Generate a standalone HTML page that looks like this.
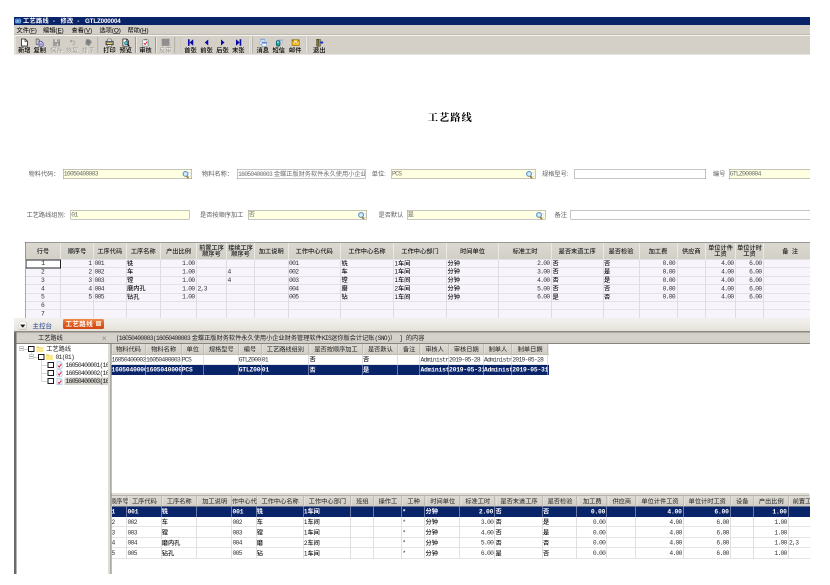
<!DOCTYPE html>
<html lang="zh-CN"><head><meta charset="utf-8"><title>工艺路线 - 修改 - GTLZ000004</title>
<style>
html,body{margin:0;padding:0;background:#fff;width:830px;height:585px;overflow:hidden}
#s{position:absolute;left:0;top:0;width:1660px;height:1170px;transform:scale(.5);transform-origin:0 0;font:12.4px/14px "Liberation Sans","Noto Sans CJK SC",sans-serif;color:#000;overflow:hidden;will-change:transform}
#s div{position:absolute;white-space:nowrap;box-sizing:border-box}
.n{font-family:"Liberation Mono","Noto Sans CJK SC",monospace;font-size:12.6px;letter-spacing:-1.36px;margin-top:0.5px}
u{text-decoration:underline}
</style></head>
<body>
<div id="s">
<div style="left:28px;top:34px;width:1591.5px;height:15.6px;background:#0a246a"></div>
<svg style="position:absolute;left:30px;top:36.500px" width="12.500" height="10.500" viewBox="0 0 13 12" preserveAspectRatio="none"><rect width="13" height="12" rx="2.500" fill="#3f80cf"/><rect x="1.500" y="3" width="10" height="6" rx="1" fill="#a9cff2"/><path d="M3 4v4M3 6l2-2M3 6l2 2M7 4h2.500v2H7.500h2v2H7" fill="none" stroke="#2a5fb0" stroke-width="1"/></svg>
<div style="left:46px;top:34.5px;height:15px;line-height:15px;color:#fff;font-weight:bold"><span style="letter-spacing:0.6px">工艺路线</span><span style="letter-spacing:4px"> - </span><span style="letter-spacing:0.6px">修改</span><span style="letter-spacing:4px"> - </span><span style="letter-spacing:-0.25px">GTLZ000004</span></div>
<div style="left:28px;top:49.6px;width:1591.5px;height:20px;background:#d4d0c8"></div>
<div style="left:33px;top:53.5px;height:15px;line-height:15px;">文件(<u>F</u>)</div>
<div style="left:86px;top:53.5px;height:15px;line-height:15px;">编辑(<u>E</u>)</div>
<div style="left:143px;top:53.5px;height:15px;line-height:15px;">查看(<u>V</u>)</div>
<div style="left:199px;top:53.5px;height:15px;line-height:15px;">选项(<u>O</u>)</div>
<div style="left:255px;top:53.5px;height:15px;line-height:15px;">帮助(<u>H</u>)</div>
<div style="left:28px;top:69px;width:1591.5px;height:39.6px;background:#d4d0c8;border-top:1.2px solid #a9a69f"></div>
<div style="left:28px;top:70.2px;width:1591.5px;height:1.4px;background:#f6f5f1"></div>
<div style="left:29px;top:70.2px;width:1.6px;height:37.4px;background:#f1f0eb"></div>
<div style="left:28px;top:107.6px;width:1591.5px;height:1px;background:#cbc8c0"></div>
<svg style="position:absolute;left:40.6px;top:77px" width="16" height="16" viewBox="0 0 16 16"><path d="M1.8 1h7.4l4.6 4.4V15.2H1.8z" fill="#fff" stroke="#2a2a2a" stroke-width="1.7"/><path d="M9 1v4.6h4.8" fill="none" stroke="#2a2a2a" stroke-width="1.4"/></svg>
<div style="left:33.6px;top:93.6px;width:30px;height:14px;line-height:14px;text-align:center;color:#000;font-weight:500">新增</div>
<svg style="position:absolute;left:71.4px;top:77px" width="16" height="16" viewBox="0 0 16 16"><path d="M1.200 1h4.600l2 2v8.500H1.200z" fill="#c4c4c4" stroke="#5a5a5a" stroke-width="1.300"/><path d="M7.200 5.400h4.300l3.700 3.600v6.200H7.200z" fill="#e4e6fa" stroke="#3434b0" stroke-width="1.500"/><path d="M9.300 9.300h3.800v3.900H9.300z" fill="#9094a6"/></svg>
<div style="left:64.4px;top:93.6px;width:30px;height:14px;line-height:14px;text-align:center;color:#000;font-weight:500">复制</div>
<svg style="position:absolute;left:105px;top:77px" width="16" height="16" viewBox="0 0 16 16"><rect x="1.5" y="1.5" width="13.5" height="13.8" fill="#8f8f8f"/><rect x="4.3" y="1.5" width="7.5" height="5.8" fill="#dad7d0"/><rect x="9" y="2.3" width="1.8" height="4" fill="#8f8f8f"/><rect x="4" y="9.6" width="8.5" height="5.7" fill="#a9a6a0"/><rect x="9.2" y="10.6" width="2.2" height="3.6" fill="#e4e2dc"/></svg>
<div style="left:100px;top:94.6px;width:28px;height:14px;line-height:14px;text-align:center;color:#fff">保存</div>
<div style="left:99px;top:93.6px;width:28px;height:14px;line-height:14px;text-align:center;color:#9a978f">保存</div>
<svg style="position:absolute;left:136.6px;top:77px" width="16" height="16" viewBox="0 0 16 16"><path d="M5 5h4.2a3.6 3.6 0 0 1 0 7.2H8" fill="none" stroke="#a3a09a" stroke-width="1.5"/><path d="M6.2 2 2.6 5 6.2 8z" fill="#8f8c86"/></svg>
<div style="left:131.6px;top:94.6px;width:28px;height:14px;line-height:14px;text-align:center;color:#fff">恢复</div>
<div style="left:130.6px;top:93.6px;width:28px;height:14px;line-height:14px;text-align:center;color:#9a978f">恢复</div>
<svg style="position:absolute;left:168.6px;top:77px" width="16" height="16" viewBox="0 0 16 16"><path d="M3 1.5h7l1 2 3 1v5l-2 1-1 3-3 1.5-3-2-3-1V6l1-2z" fill="#8a8a8a"/><path d="M5 3h5v7H5z" fill="#7c7c7c"/></svg>
<div style="left:163.6px;top:94.6px;width:28px;height:14px;line-height:14px;text-align:center;color:#fff">排序</div>
<div style="left:162.6px;top:93.6px;width:28px;height:14px;line-height:14px;text-align:center;color:#9a978f">排序</div>
<svg style="position:absolute;left:211px;top:77px" width="16" height="16" viewBox="0 0 16 16"><path d="M4.5 1h6.5l2 4.5H3z" fill="#fff" stroke="#333" stroke-width="1"/><path d="M1 5.5h14.5v7H1z" fill="#bdbab2" stroke="#222" stroke-width="1.3"/><rect x="2.5" y="8.5" width="11.5" height="3.4" fill="#e3d04e" stroke="#444" stroke-width=".7"/><path d="M3.5 12.5h9.5l-1 2.8H4.5z" fill="#fff" stroke="#222" stroke-width="1"/><circle cx="12.6" cy="7" r=".9" fill="#3c3"/></svg>
<div style="left:204px;top:93.6px;width:30px;height:14px;line-height:14px;text-align:center;color:#000;font-weight:500">打印</div>
<svg style="position:absolute;left:243.5px;top:77px" width="16" height="16" viewBox="0 0 16 16"><path d="M1.8 1h7.2l4 4V15.2H1.8z" fill="#fff" stroke="#222" stroke-width="1.6"/><path d="M9 1v4h4" fill="none" stroke="#222" stroke-width="1.2"/><circle cx="8.2" cy="9.3" r="3.1" fill="#58d6d6" stroke="#1d6a78" stroke-width="1.5"/><path d="M10.6 11.8 15 16" stroke="#111" stroke-width="2.4"/></svg>
<div style="left:236.5px;top:93.6px;width:30px;height:14px;line-height:14px;text-align:center;color:#000;font-weight:500">预览</div>
<svg style="position:absolute;left:283px;top:77px" width="16" height="16" viewBox="0 0 16 16"><rect x="2.6" y="2.6" width="11" height="12.6" rx="1" fill="#fff" stroke="#75878e" stroke-width="1.3"/><rect x="5.5" y=".8" width="5.2" height="3" rx=".8" fill="#6f8088"/><path d="M4.8 9.4l2.4 2.6L11.6 6.2" fill="none" stroke="#dc1e2c" stroke-width="2"/><path d="M13 4.5v9.5" stroke="#55a9b4" stroke-width="1.6"/></svg>
<div style="left:276px;top:93.6px;width:30px;height:14px;line-height:14px;text-align:center;color:#000;font-weight:500">审核</div>
<svg style="position:absolute;left:323px;top:77px" width="16" height="16" viewBox="0 0 16 16"><rect x=".5" y=".5" width="16" height="14" fill="#8e8e8e"/><rect x=".5" y=".5" width="16" height="14" fill="none" stroke="#a8a8a8" stroke-width="1"/></svg>
<div style="left:318px;top:94.6px;width:28px;height:14px;line-height:14px;text-align:center;color:#fff">反审</div>
<div style="left:317px;top:93.6px;width:28px;height:14px;line-height:14px;text-align:center;color:#9a978f">反审</div>
<svg style="position:absolute;left:373px;top:77px" width="16" height="16" viewBox="0 0 16 16"><rect x="3" y="1.5" width="3.2" height="13" fill="#0808a8"/><path d="M13.5 1.5v13L6.2 8z" fill="#0808a8"/></svg>
<div style="left:366px;top:93.6px;width:30px;height:14px;line-height:14px;text-align:center;color:#000;font-weight:500">首张</div>
<svg style="position:absolute;left:405px;top:77px" width="16" height="16" viewBox="0 0 16 16"><path d="M11.5 2v12L4.5 8z" fill="#0808a8"/></svg>
<div style="left:398px;top:93.6px;width:30px;height:14px;line-height:14px;text-align:center;color:#000;font-weight:500">前张</div>
<svg style="position:absolute;left:437px;top:77px" width="16" height="16" viewBox="0 0 16 16"><path d="M5 2v12l7-6z" fill="#0808a8"/></svg>
<div style="left:430px;top:93.6px;width:30px;height:14px;line-height:14px;text-align:center;color:#000;font-weight:500">后张</div>
<svg style="position:absolute;left:468.6px;top:77px" width="16" height="16" viewBox="0 0 16 16"><rect x="10.3" y="1.5" width="3.2" height="13" fill="#0808a8"/><path d="M3 1.5v13l7.3-6.500z" fill="#0808a8"/></svg>
<div style="left:461.6px;top:93.6px;width:30px;height:14px;line-height:14px;text-align:center;color:#000;font-weight:500">末张</div>
<svg style="position:absolute;left:517.5px;top:77px" width="16" height="16" viewBox="0 0 16 16"><rect x="2.5" y="1" width="9" height="8" rx="1" fill="#e8f1fb" stroke="#8aa5d4" stroke-width="1"/><rect x="2.5" y="1" width="9" height="2.6" fill="#86a8e0"/><rect x="1" y="5.5" width="7" height="6" rx="1" fill="#dfe9f8" stroke="#8aa5d4" stroke-width=".9"/><rect x="6" y="7.5" width="9.5" height="8" rx="1" fill="#f2f7fd" stroke="#6b8fc9" stroke-width="1.1"/><rect x="6" y="7.5" width="9.5" height="2.6" fill="#5c88d2"/></svg>
<div style="left:510.5px;top:93.6px;width:30px;height:14px;line-height:14px;text-align:center;color:#000;font-weight:500">消息</div>
<svg style="position:absolute;left:549.5px;top:77px" width="16" height="16" viewBox="0 0 16 16"><rect x="8" y="1.5" width="7" height="7.5" fill="#d5ddee" stroke="#93a4c6" stroke-width=".9"/><rect x="9.5" y="3" width="4" height="2" fill="#8fa6d6"/><rect x="2.5" y="4" width="7.5" height="11.5" rx="3" fill="#1b9ca2" stroke="#0c4f5a" stroke-width="1.2"/><rect x="4.3" y="6" width="3.8" height="3.4" fill="#8de6e2"/></svg>
<div style="left:542.5px;top:93.6px;width:30px;height:14px;line-height:14px;text-align:center;color:#000;font-weight:500">短信</div>
<svg style="position:absolute;left:582.5px;top:77px" width="16" height="16" viewBox="0 0 16 16"><rect x="1" y="2.5" width="14.5" height="11.5" fill="#f4c42c" stroke="#8a6808" stroke-width="1.3"/><path d="M1.5 3 8.2 9.2 15 3" fill="none" stroke="#7a5208" stroke-width="1.3"/><rect x="5" y="5.2" width="6.4" height="3.2" fill="#fffad8" opacity=".9"/></svg>
<div style="left:575.5px;top:93.6px;width:30px;height:14px;line-height:14px;text-align:center;color:#000;font-weight:500">邮件</div>
<svg style="position:absolute;left:630.5px;top:77px" width="16" height="16" viewBox="0 0 16 16"><path d="M2.5 1.5h7v14h-7z" fill="#cdb94e" stroke="#3e3a1c" stroke-width="1.2"/><path d="M2.5 1.500l4.5 2.2v12.800l-4.500-1.500z" fill="#7f752c" stroke="#33301a" stroke-width="1"/><path d="M9 6.800h3.200V4.300l3.800 3.700-3.800 3.700V9.200H9z" fill="#1428d0"/></svg>
<div style="left:623.5px;top:93.6px;width:30px;height:14px;line-height:14px;text-align:center;color:#000;font-weight:500">退出</div>
<div style="left:195.4px;top:73.5px;width:1.6px;height:32px;background:#9d9a93"></div>
<div style="left:197px;top:73.5px;width:1.2px;height:32px;background:#fbfaf8"></div>
<div style="left:270.2px;top:73.5px;width:1.6px;height:32px;background:#9d9a93"></div>
<div style="left:271.8px;top:73.5px;width:1.2px;height:32px;background:#fbfaf8"></div>
<div style="left:310.2px;top:73.5px;width:1.6px;height:32px;background:#9d9a93"></div>
<div style="left:311.8px;top:73.5px;width:1.2px;height:32px;background:#fbfaf8"></div>
<div style="left:349.3px;top:73.5px;width:1.6px;height:32px;background:#9d9a93"></div>
<div style="left:350.9px;top:73.5px;width:1.2px;height:32px;background:#fbfaf8"></div>
<div style="left:495.8px;top:73.5px;width:1.6px;height:32px;background:#9d9a93"></div>
<div style="left:497.4px;top:73.5px;width:1.2px;height:32px;background:#fbfaf8"></div>
<div style="left:609.8px;top:73.5px;width:1.6px;height:32px;background:#9d9a93"></div>
<div style="left:611.4px;top:73.5px;width:1.2px;height:32px;background:#fbfaf8"></div>
<div style="left:359.8px;top:72.5px;width:1.2px;height:34px;background:#fbfaf8"></div>
<div style="left:361px;top:72.5px;width:1.4px;height:34px;background:#99968e"></div>
<div style="left:503.3px;top:72.5px;width:1.2px;height:34px;background:#fbfaf8"></div>
<div style="left:504.5px;top:72.5px;width:1.4px;height:34px;background:#99968e"></div>
<div style="left:615.8px;top:72.5px;width:1.2px;height:34px;background:#fbfaf8"></div>
<div style="left:617px;top:72.5px;width:1.4px;height:34px;background:#99968e"></div>
<div style="left:800.5px;top:221.5px;width:200px;height:26px;line-height:26px;font:700 20.6px/26px 'Liberation Serif','Noto Serif CJK SC',serif;letter-spacing:1.9px;text-align:center;color:#000">工艺路线</div>
<div style="left:57px;top:341px;height:14px;line-height:14px;color:#5c5c5c">物料代码：</div>
<div style="left:126px;top:338px;width:257.5px;height:19.6px;background:#ffffe1;border:1px solid #8c8c8c"></div>
<div class="n" style="left:127.5px;top:340.2px;height:14px;line-height:14px;color:#6e6e6e">16050400003</div>
<svg style="position:absolute;left:364px;top:339.5px" width="18" height="18" viewBox="0 0 16 16"><rect x="8" y="4.500" width="7" height="7" fill="#fff" stroke="#c3cfe6" stroke-width=".8"/><circle cx="6.300" cy="7" r="4.300" fill="#d2effb" stroke="#5f8fd2" stroke-width="2"/><path d="M9.200 11.800l1.600 1.900" stroke="#a5831c" stroke-width="3.200" stroke-linecap="round"/></svg>
<div style="left:404px;top:341px;height:14px;line-height:14px;color:#5c5c5c">物料名称：</div>
<div style="left:474px;top:338px;width:256.6px;height:19.6px;background:#fff;border:1px solid #8c8c8c;overflow:hidden"><div style="left:1px;top:1.5px;height:14px;line-height:14px;color:#6e6e6e"><span class="n" style="position:static">16050400003</span> 金蝶正版财务软件永久使用小企业财务管理软件</div></div>
<div style="left:743.5px;top:341px;height:14px;line-height:14px;color:#5c5c5c">单位:</div>
<div style="left:782.6px;top:338px;width:288px;height:19.6px;background:#ffffe1;border:1px solid #8c8c8c"></div>
<div class="n" style="left:784.1px;top:340.2px;height:14px;line-height:14px;color:#6e6e6e">PCS</div>
<svg style="position:absolute;left:1051.1px;top:339.5px" width="18" height="18" viewBox="0 0 16 16"><rect x="8" y="4.500" width="7" height="7" fill="#fff" stroke="#c3cfe6" stroke-width=".8"/><circle cx="6.300" cy="7" r="4.300" fill="#d2effb" stroke="#5f8fd2" stroke-width="2"/><path d="M9.200 11.800l1.600 1.900" stroke="#a5831c" stroke-width="3.200" stroke-linecap="round"/></svg>
<div style="left:1084px;top:341px;height:14px;line-height:14px;color:#5c5c5c">规格型号:</div>
<div style="left:1149.4px;top:338px;width:262.6px;height:19.6px;background:#fff;border:1px solid #8c8c8c"></div>
<div style="left:1426px;top:341px;height:14px;line-height:14px;color:#5c5c5c">编号</div>
<div style="left:1458px;top:338px;width:167px;height:19.6px;background:#ffffe1;border:1px solid #8c8c8c"></div>
<div class="n" style="left:1459.5px;top:340.2px;height:14px;line-height:14px;color:#6e6e6e">GTLZ000004</div>
<div style="left:53px;top:422.5px;height:14px;line-height:14px;color:#5c5c5c">工艺路线组别:</div>
<div style="left:141px;top:420px;width:238px;height:18.8px;background:#ffffe1;border:1px solid #8c8c8c"></div>
<div class="n" style="left:142.5px;top:422.2px;height:14px;line-height:14px;color:#6e6e6e">01</div>
<div style="left:400px;top:422.5px;height:14px;line-height:14px;color:#5c5c5c">是否按顺序加工</div>
<div style="left:496px;top:420px;width:238px;height:18.8px;background:#ffffe1;border:1px solid #8c8c8c"></div>
<div style="left:497.5px;top:422.2px;height:14px;line-height:14px;color:#6e6e6e">否</div>
<svg style="position:absolute;left:714.5px;top:421.5px" width="18" height="18" viewBox="0 0 16 16"><rect x="8" y="4.500" width="7" height="7" fill="#fff" stroke="#c3cfe6" stroke-width=".8"/><circle cx="6.300" cy="7" r="4.300" fill="#d2effb" stroke="#5f8fd2" stroke-width="2"/><path d="M9.200 11.800l1.600 1.900" stroke="#a5831c" stroke-width="3.200" stroke-linecap="round"/></svg>
<div style="left:757px;top:422.5px;height:14px;line-height:14px;color:#5c5c5c">是否默认</div>
<div style="left:814px;top:420px;width:276.6px;height:18.8px;background:#ffffe1;border:1px solid #8c8c8c"></div>
<div style="left:815.5px;top:422.2px;height:14px;line-height:14px;color:#6e6e6e">是</div>
<svg style="position:absolute;left:1071.1px;top:421.5px" width="18" height="18" viewBox="0 0 16 16"><rect x="8" y="4.500" width="7" height="7" fill="#fff" stroke="#c3cfe6" stroke-width=".8"/><circle cx="6.300" cy="7" r="4.300" fill="#d2effb" stroke="#5f8fd2" stroke-width="2"/><path d="M9.200 11.800l1.600 1.900" stroke="#a5831c" stroke-width="3.200" stroke-linecap="round"/></svg>
<div style="left:1109px;top:422.5px;height:14px;line-height:14px;color:#5c5c5c">备注</div>
<div style="left:1140.6px;top:420px;width:484.4px;height:18.8px;background:#fff;border:1px solid #8c8c8c"></div>
<div style="left:1619.5px;top:300px;width:60px;height:200px;background:#fff"></div>
<div style="left:51px;top:484.5px;width:1568.5px;height:151.9px;background:#f7f4fb"></div>
<div style="left:51px;top:484.5px;width:1568.5px;height:34.3px;background:linear-gradient(#dcd9d2,#d2cfc7)"></div>
<div style="left:50px;top:483.5px;width:1569.5px;height:1.6px;background:#5a5a5a"></div>
<div style="left:49.6px;top:483.5px;width:1.6px;height:152.9px;background:#5a5a5a"></div>
<div style="left:51px;top:495.5px;width:70px;height:14px;line-height:14px;text-align:center;color:#1a1a1a;font-weight:500">行号</div>
<div style="left:120px;top:485.5px;width:2px;height:33.3px;background:#ebe9e4"></div>
<div style="left:121px;top:495.5px;width:66px;height:14px;line-height:14px;text-align:center;color:#1a1a1a;font-weight:500">顺序号</div>
<div style="left:186px;top:485.5px;width:2px;height:33.3px;background:#ebe9e4"></div>
<div style="left:187px;top:495.5px;width:65px;height:14px;line-height:14px;text-align:center;color:#1a1a1a;font-weight:500">工序代码</div>
<div style="left:252px;top:485.5px;width:2px;height:33.3px;background:#ebe9e4"></div>
<div style="left:252px;top:495.5px;width:69px;height:14px;line-height:14px;text-align:center;color:#1a1a1a;font-weight:500">工序名称</div>
<div style="left:320px;top:485.5px;width:2px;height:33.3px;background:#ebe9e4"></div>
<div style="left:321px;top:495.5px;width:72px;height:14px;line-height:14px;text-align:center;color:#1a1a1a;font-weight:500">产出比例</div>
<div style="left:392px;top:485.5px;width:2px;height:33.3px;background:#ebe9e4"></div>
<div style="left:393px;top:491px;width:60px;height:24px;line-height:24px;text-align:center;line-height:11.6px;color:#1a1a1a;font-weight:500">前置工序<br>顺序号</div>
<div style="left:452px;top:485.5px;width:2px;height:33.3px;background:#ebe9e4"></div>
<div style="left:453px;top:491px;width:56px;height:24px;line-height:24px;text-align:center;line-height:11.6px;color:#1a1a1a;font-weight:500">接续工序<br>顺序号</div>
<div style="left:508px;top:485.5px;width:2px;height:33.3px;background:#ebe9e4"></div>
<div style="left:509px;top:495.5px;width:67px;height:14px;line-height:14px;text-align:center;color:#1a1a1a;font-weight:500">加工说明</div>
<div style="left:576px;top:485.5px;width:2px;height:33.3px;background:#ebe9e4"></div>
<div style="left:576px;top:495.5px;width:105px;height:14px;line-height:14px;text-align:center;color:#1a1a1a;font-weight:500">工作中心代码</div>
<div style="left:680px;top:485.5px;width:2px;height:33.3px;background:#ebe9e4"></div>
<div style="left:681px;top:495.5px;width:106px;height:14px;line-height:14px;text-align:center;color:#1a1a1a;font-weight:500">工作中心名称</div>
<div style="left:786px;top:485.5px;width:2px;height:33.3px;background:#ebe9e4"></div>
<div style="left:787px;top:495.5px;width:106px;height:14px;line-height:14px;text-align:center;color:#1a1a1a;font-weight:500">工作中心部门</div>
<div style="left:892px;top:485.5px;width:2px;height:33.3px;background:#ebe9e4"></div>
<div style="left:893px;top:495.5px;width:104px;height:14px;line-height:14px;text-align:center;color:#1a1a1a;font-weight:500">时间单位</div>
<div style="left:996px;top:485.5px;width:2px;height:33.3px;background:#ebe9e4"></div>
<div style="left:997px;top:495.5px;width:106px;height:14px;line-height:14px;text-align:center;color:#1a1a1a;font-weight:500">标准工时</div>
<div style="left:1102px;top:485.5px;width:2px;height:33.3px;background:#ebe9e4"></div>
<div style="left:1103px;top:495.5px;width:103px;height:14px;line-height:14px;text-align:center;color:#1a1a1a;font-weight:500">是否末道工序</div>
<div style="left:1206px;top:485.5px;width:2px;height:33.3px;background:#ebe9e4"></div>
<div style="left:1206px;top:495.5px;width:72px;height:14px;line-height:14px;text-align:center;color:#1a1a1a;font-weight:500">是否检验</div>
<div style="left:1278px;top:485.5px;width:2px;height:33.3px;background:#ebe9e4"></div>
<div style="left:1278px;top:495.5px;width:76px;height:14px;line-height:14px;text-align:center;color:#1a1a1a;font-weight:500">加工费</div>
<div style="left:1354px;top:485.5px;width:2px;height:33.3px;background:#ebe9e4"></div>
<div style="left:1354px;top:495.5px;width:57px;height:14px;line-height:14px;text-align:center;color:#1a1a1a;font-weight:500">供应商</div>
<div style="left:1410px;top:485.5px;width:2px;height:33.3px;background:#ebe9e4"></div>
<div style="left:1411px;top:491px;width:60px;height:24px;line-height:24px;text-align:center;line-height:11.6px;color:#1a1a1a;font-weight:500">单位计件<br>工资</div>
<div style="left:1470px;top:485.5px;width:2px;height:33.3px;background:#ebe9e4"></div>
<div style="left:1471px;top:491px;width:56px;height:24px;line-height:24px;text-align:center;line-height:11.6px;color:#1a1a1a;font-weight:500">单位计时<br>工资</div>
<div style="left:1526px;top:485.5px;width:2px;height:33.3px;background:#ebe9e4"></div>
<div style="left:1534px;top:495.5px;width:92.5px;height:14px;line-height:14px;text-align:center;color:#1a1a1a;font-weight:500">备&nbsp;&nbsp;注</div>
<div style="left:51px;top:518px;width:1568.5px;height:2px;background:#e4e1e9"></div>
<div style="left:51px;top:534px;width:1568.5px;height:2px;background:#e4e1e9"></div>
<div style="left:51px;top:552px;width:1568.5px;height:2px;background:#e4e1e9"></div>
<div style="left:51px;top:568px;width:1568.5px;height:2px;background:#e4e1e9"></div>
<div style="left:51px;top:586px;width:1568.5px;height:2px;background:#e4e1e9"></div>
<div style="left:51px;top:602px;width:1568.5px;height:2px;background:#e4e1e9"></div>
<div style="left:51px;top:618px;width:1568.5px;height:2px;background:#e4e1e9"></div>
<div style="left:51px;top:636px;width:1568.5px;height:2px;background:#e4e1e9"></div>
<div style="left:120px;top:518.8px;width:2px;height:117.6px;background:#dfdce5"></div>
<div style="left:186px;top:518.8px;width:2px;height:117.6px;background:#dfdce5"></div>
<div style="left:252px;top:518.8px;width:2px;height:117.6px;background:#dfdce5"></div>
<div style="left:320px;top:518.8px;width:2px;height:117.6px;background:#dfdce5"></div>
<div style="left:392px;top:518.8px;width:2px;height:117.6px;background:#dfdce5"></div>
<div style="left:452px;top:518.8px;width:2px;height:117.6px;background:#dfdce5"></div>
<div style="left:508px;top:518.8px;width:2px;height:117.6px;background:#dfdce5"></div>
<div style="left:576px;top:518.8px;width:2px;height:117.6px;background:#dfdce5"></div>
<div style="left:680px;top:518.8px;width:2px;height:117.6px;background:#dfdce5"></div>
<div style="left:786px;top:518.8px;width:2px;height:117.6px;background:#dfdce5"></div>
<div style="left:892px;top:518.8px;width:2px;height:117.6px;background:#dfdce5"></div>
<div style="left:996px;top:518.8px;width:2px;height:117.6px;background:#dfdce5"></div>
<div style="left:1102px;top:518.8px;width:2px;height:117.6px;background:#dfdce5"></div>
<div style="left:1206px;top:518.8px;width:2px;height:117.6px;background:#dfdce5"></div>
<div style="left:1278px;top:518.8px;width:2px;height:117.6px;background:#dfdce5"></div>
<div style="left:1354px;top:518.8px;width:2px;height:117.6px;background:#dfdce5"></div>
<div style="left:1410px;top:518.8px;width:2px;height:117.6px;background:#dfdce5"></div>
<div style="left:1470px;top:518.8px;width:2px;height:117.6px;background:#dfdce5"></div>
<div style="left:1526px;top:518.8px;width:2px;height:117.6px;background:#dfdce5"></div>
<div class="n" style="left:53px;top:519.6px;width:64px;height:14px;line-height:14px;text-align:center;color:#333">1</div>
<div class="n" style="left:123px;top:519.6px;width:60px;height:14px;line-height:14px;text-align:right;color:#333">1</div>
<div class="n" style="left:189px;top:519.6px;width:59px;height:14px;line-height:14px;text-align:left;color:#333">001</div>
<div style="left:254px;top:519.6px;width:63px;height:14px;line-height:14px;text-align:left;color:#0a0a0a;font-weight:500">铣</div>
<div class="n" style="left:323px;top:519.6px;width:66px;height:14px;line-height:14px;text-align:right;color:#333">1.00</div>
<div class="n" style="left:578px;top:519.6px;width:99px;height:14px;line-height:14px;text-align:left;color:#333">001</div>
<div style="left:683px;top:519.6px;width:100px;height:14px;line-height:14px;text-align:left;color:#0a0a0a;font-weight:500">铣</div>
<div style="left:789px;top:519.6px;width:100px;height:14px;line-height:14px;text-align:left;color:#0a0a0a;font-weight:500">1车间</div>
<div style="left:895px;top:519.6px;width:98px;height:14px;line-height:14px;text-align:left;color:#0a0a0a;font-weight:500">分钟</div>
<div class="n" style="left:999px;top:519.6px;width:100px;height:14px;line-height:14px;text-align:right;color:#333">2.00</div>
<div style="left:1105px;top:519.6px;width:97px;height:14px;line-height:14px;text-align:left;color:#0a0a0a;font-weight:500">否</div>
<div style="left:1208px;top:519.6px;width:66px;height:14px;line-height:14px;text-align:left;color:#0a0a0a;font-weight:500">否</div>
<div class="n" style="left:1280px;top:519.6px;width:70px;height:14px;line-height:14px;text-align:right;color:#333">0.00</div>
<div class="n" style="left:1413px;top:519.6px;width:54px;height:14px;line-height:14px;text-align:right;color:#333">4.00</div>
<div class="n" style="left:1473px;top:519.6px;width:50px;height:14px;line-height:14px;text-align:right;color:#333">6.00</div>
<div class="n" style="left:53px;top:536.4px;width:64px;height:14px;line-height:14px;text-align:center;color:#333">2</div>
<div class="n" style="left:123px;top:536.4px;width:60px;height:14px;line-height:14px;text-align:right;color:#333">2</div>
<div class="n" style="left:189px;top:536.4px;width:59px;height:14px;line-height:14px;text-align:left;color:#333">002</div>
<div style="left:254px;top:536.4px;width:63px;height:14px;line-height:14px;text-align:left;color:#0a0a0a;font-weight:500">车</div>
<div class="n" style="left:323px;top:536.4px;width:66px;height:14px;line-height:14px;text-align:right;color:#333">1.00</div>
<div class="n" style="left:455px;top:536.4px;width:50px;height:14px;line-height:14px;text-align:left;color:#333">4</div>
<div class="n" style="left:578px;top:536.4px;width:99px;height:14px;line-height:14px;text-align:left;color:#333">002</div>
<div style="left:683px;top:536.4px;width:100px;height:14px;line-height:14px;text-align:left;color:#0a0a0a;font-weight:500">车</div>
<div style="left:789px;top:536.4px;width:100px;height:14px;line-height:14px;text-align:left;color:#0a0a0a;font-weight:500">1车间</div>
<div style="left:895px;top:536.4px;width:98px;height:14px;line-height:14px;text-align:left;color:#0a0a0a;font-weight:500">分钟</div>
<div class="n" style="left:999px;top:536.4px;width:100px;height:14px;line-height:14px;text-align:right;color:#333">3.00</div>
<div style="left:1105px;top:536.4px;width:97px;height:14px;line-height:14px;text-align:left;color:#0a0a0a;font-weight:500">否</div>
<div style="left:1208px;top:536.4px;width:66px;height:14px;line-height:14px;text-align:left;color:#0a0a0a;font-weight:500">是</div>
<div class="n" style="left:1280px;top:536.4px;width:70px;height:14px;line-height:14px;text-align:right;color:#333">0.00</div>
<div class="n" style="left:1413px;top:536.4px;width:54px;height:14px;line-height:14px;text-align:right;color:#333">4.00</div>
<div class="n" style="left:1473px;top:536.4px;width:50px;height:14px;line-height:14px;text-align:right;color:#333">6.00</div>
<div class="n" style="left:53px;top:553.2px;width:64px;height:14px;line-height:14px;text-align:center;color:#333">3</div>
<div class="n" style="left:123px;top:553.2px;width:60px;height:14px;line-height:14px;text-align:right;color:#333">3</div>
<div class="n" style="left:189px;top:553.2px;width:59px;height:14px;line-height:14px;text-align:left;color:#333">003</div>
<div style="left:254px;top:553.2px;width:63px;height:14px;line-height:14px;text-align:left;color:#0a0a0a;font-weight:500">镗</div>
<div class="n" style="left:323px;top:553.2px;width:66px;height:14px;line-height:14px;text-align:right;color:#333">1.00</div>
<div class="n" style="left:455px;top:553.2px;width:50px;height:14px;line-height:14px;text-align:left;color:#333">4</div>
<div class="n" style="left:578px;top:553.2px;width:99px;height:14px;line-height:14px;text-align:left;color:#333">003</div>
<div style="left:683px;top:553.2px;width:100px;height:14px;line-height:14px;text-align:left;color:#0a0a0a;font-weight:500">镗</div>
<div style="left:789px;top:553.2px;width:100px;height:14px;line-height:14px;text-align:left;color:#0a0a0a;font-weight:500">1车间</div>
<div style="left:895px;top:553.2px;width:98px;height:14px;line-height:14px;text-align:left;color:#0a0a0a;font-weight:500">分钟</div>
<div class="n" style="left:999px;top:553.2px;width:100px;height:14px;line-height:14px;text-align:right;color:#333">4.00</div>
<div style="left:1105px;top:553.2px;width:97px;height:14px;line-height:14px;text-align:left;color:#0a0a0a;font-weight:500">否</div>
<div style="left:1208px;top:553.2px;width:66px;height:14px;line-height:14px;text-align:left;color:#0a0a0a;font-weight:500">是</div>
<div class="n" style="left:1280px;top:553.2px;width:70px;height:14px;line-height:14px;text-align:right;color:#333">0.00</div>
<div class="n" style="left:1413px;top:553.2px;width:54px;height:14px;line-height:14px;text-align:right;color:#333">4.00</div>
<div class="n" style="left:1473px;top:553.2px;width:50px;height:14px;line-height:14px;text-align:right;color:#333">6.00</div>
<div class="n" style="left:53px;top:570px;width:64px;height:14px;line-height:14px;text-align:center;color:#333">4</div>
<div class="n" style="left:123px;top:570px;width:60px;height:14px;line-height:14px;text-align:right;color:#333">4</div>
<div class="n" style="left:189px;top:570px;width:59px;height:14px;line-height:14px;text-align:left;color:#333">004</div>
<div style="left:254px;top:570px;width:63px;height:14px;line-height:14px;text-align:left;color:#0a0a0a;font-weight:500">磨内孔</div>
<div class="n" style="left:323px;top:570px;width:66px;height:14px;line-height:14px;text-align:right;color:#333">1.00</div>
<div class="n" style="left:395px;top:570px;width:54px;height:14px;line-height:14px;text-align:left;color:#333">2,3</div>
<div class="n" style="left:578px;top:570px;width:99px;height:14px;line-height:14px;text-align:left;color:#333">004</div>
<div style="left:683px;top:570px;width:100px;height:14px;line-height:14px;text-align:left;color:#0a0a0a;font-weight:500">磨</div>
<div style="left:789px;top:570px;width:100px;height:14px;line-height:14px;text-align:left;color:#0a0a0a;font-weight:500">2车间</div>
<div style="left:895px;top:570px;width:98px;height:14px;line-height:14px;text-align:left;color:#0a0a0a;font-weight:500">分钟</div>
<div class="n" style="left:999px;top:570px;width:100px;height:14px;line-height:14px;text-align:right;color:#333">5.00</div>
<div style="left:1105px;top:570px;width:97px;height:14px;line-height:14px;text-align:left;color:#0a0a0a;font-weight:500">否</div>
<div style="left:1208px;top:570px;width:66px;height:14px;line-height:14px;text-align:left;color:#0a0a0a;font-weight:500">否</div>
<div class="n" style="left:1280px;top:570px;width:70px;height:14px;line-height:14px;text-align:right;color:#333">0.00</div>
<div class="n" style="left:1413px;top:570px;width:54px;height:14px;line-height:14px;text-align:right;color:#333">4.00</div>
<div class="n" style="left:1473px;top:570px;width:50px;height:14px;line-height:14px;text-align:right;color:#333">6.00</div>
<div class="n" style="left:53px;top:586.8px;width:64px;height:14px;line-height:14px;text-align:center;color:#333">5</div>
<div class="n" style="left:123px;top:586.8px;width:60px;height:14px;line-height:14px;text-align:right;color:#333">5</div>
<div class="n" style="left:189px;top:586.8px;width:59px;height:14px;line-height:14px;text-align:left;color:#333">005</div>
<div style="left:254px;top:586.8px;width:63px;height:14px;line-height:14px;text-align:left;color:#0a0a0a;font-weight:500">钻孔</div>
<div class="n" style="left:323px;top:586.8px;width:66px;height:14px;line-height:14px;text-align:right;color:#333">1.00</div>
<div class="n" style="left:578px;top:586.8px;width:99px;height:14px;line-height:14px;text-align:left;color:#333">005</div>
<div style="left:683px;top:586.8px;width:100px;height:14px;line-height:14px;text-align:left;color:#0a0a0a;font-weight:500">钻</div>
<div style="left:789px;top:586.8px;width:100px;height:14px;line-height:14px;text-align:left;color:#0a0a0a;font-weight:500">1车间</div>
<div style="left:895px;top:586.8px;width:98px;height:14px;line-height:14px;text-align:left;color:#0a0a0a;font-weight:500">分钟</div>
<div class="n" style="left:999px;top:586.8px;width:100px;height:14px;line-height:14px;text-align:right;color:#333">6.00</div>
<div style="left:1105px;top:586.8px;width:97px;height:14px;line-height:14px;text-align:left;color:#0a0a0a;font-weight:500">是</div>
<div style="left:1208px;top:586.8px;width:66px;height:14px;line-height:14px;text-align:left;color:#0a0a0a;font-weight:500">否</div>
<div class="n" style="left:1280px;top:586.8px;width:70px;height:14px;line-height:14px;text-align:right;color:#333">0.00</div>
<div class="n" style="left:1413px;top:586.8px;width:54px;height:14px;line-height:14px;text-align:right;color:#333">4.00</div>
<div class="n" style="left:1473px;top:586.8px;width:50px;height:14px;line-height:14px;text-align:right;color:#333">6.00</div>
<div class="n" style="left:53px;top:603.6px;width:64px;height:14px;line-height:14px;text-align:center;color:#333">6</div>
<div class="n" style="left:53px;top:620.4px;width:64px;height:14px;line-height:14px;text-align:center;color:#333">7</div>
<div style="left:51px;top:518.8px;width:71px;height:17.8px;border:2px solid #222;background:#fff"></div>
<div class="n" style="left:53px;top:519.6px;width:65px;height:14px;line-height:14px;text-align:center;color:#222">1</div>
<div style="left:28px;top:636.4px;width:1591.5px;height:26.1px;background:linear-gradient(#f3f1f0,#efede8 40%,#e6e1da)"></div>
<div style="left:36.5px;top:643px;width:17.5px;height:16.5px;border-radius:6px;background:linear-gradient(#ffffff,#e6e3dd);border:1.2px solid #b3b0a9;border-left-color:#d6d3cd;border-top-color:#d6d3cd"></div>
<svg style="position:absolute;left:40px;top:648.6px" width="11" height="6.5" viewBox="0 0 11 6.5"><path d="M0.300 0.300h10.400L5.500 6.300z" fill="#111"/></svg>
<div style="left:65px;top:643.5px;height:15px;line-height:15px;color:#1f3f95;font-size:13px">主控台</div>
<div style="left:126px;top:638px;width:81.5px;height:19.5px;border-radius:3px;background:linear-gradient(#f28a4c,#e0571a 55%,#d24a12);"></div>
<div style="left:131px;top:640px;height:15px;line-height:15px;color:#fff;font-weight:bold;font-size:13px;letter-spacing:0.8px">工艺路线</div>
<div style="left:191.5px;top:642px;width:10.5px;height:9.6px;background:#f3b993;border:1px solid #fde9d8"></div>
<svg style="position:absolute;left:192.8px;top:643.2px" width="8" height="7" viewBox="0 0 8 7"><path d="M1 0.5 7 6.5M7 0.5 1 6.5" stroke="#fff" stroke-width="1.6"/><path d="M1 0.5 7 6.5M7 0.5 1 6.5" stroke="#d86a2c" stroke-width=".7"/></svg>
<div style="left:28px;top:662.2px;width:1591.5px;height:2.8px;background:#8d8a84"></div>
<div style="left:28px;top:665px;width:1591.5px;height:21px;background:linear-gradient(#d2cfc8,#d7d4ce 50%,#d1cec7)"></div>
<div style="left:28px;top:686px;width:1591.5px;height:2.2px;background:#87847e"></div>
<div style="left:76px;top:669px;height:14px;line-height:14px;color:#222">工艺路线</div>
<svg style="position:absolute;left:203.5px;top:671.5px" width="9" height="9" viewBox="0 0 9 9"><path d="M1 1 8 8M8 1 1 8" stroke="#8a8a8a" stroke-width="1.1"/></svg>
<div style="left:234px;top:669px;height:14px;line-height:14px;color:#222">[<span class="n" style="position:static">16050400003(16050400003</span> 金蝶正版财务软件永久使用小企业财务管理软件<span class="n" style="position:static">KIS</span>迷你版会计记账<span class="n" style="position:static">(SNO)</span>）<span class="n" style="position:static"> ]</span> &nbsp;的内容</div>
<div style="left:28px;top:665px;width:4.6px;height:482.5px;background:#6a6a6a"></div>
<div style="left:216px;top:688px;width:4.5px;height:459.5px;background:#dfdcd5"></div>
<div style="left:220.5px;top:688px;width:2.2px;height:459.5px;background:#7b7b7b"></div>
<div style="left:47px;top:698px;width:9px;height:2px;background:#d4d4d4"></div>
<div style="left:62px;top:704px;width:2px;height:6px;background:#dfdfdf"></div>
<div style="left:67.5px;top:714px;width:8px;height:2px;background:#d4d4d4"></div>
<div style="left:82px;top:720px;width:2px;height:42.6px;background:#dbdbdb"></div>
<div style="left:82.5px;top:730px;width:12px;height:2px;background:#dbdbdb"></div>
<div style="left:82.5px;top:746px;width:12px;height:2px;background:#dbdbdb"></div>
<div style="left:82.5px;top:762px;width:12px;height:2px;background:#dbdbdb"></div>
<div style="left:38px;top:692px;width:10px;height:10px;border:2px solid #cfcfcf;background:#fff"></div>
<div style="left:40px;top:696px;width:6px;height:2px;background:#a5a5a5"></div>
<div style="left:56px;top:692px;width:12.5px;height:12px;border:2px solid #1a1a1a;background:#fff"></div>
<svg style="position:absolute;left:71.5px;top:689.5px" width="16" height="16" viewBox="0 0 16 16"><path d="M1 3.5h5l1.5 2H15v8.5H1z" fill="#f5d55a"/><path d="M1 6h14v8H1z" fill="#fbe98e"/><path d="M1 3.5h5l1.5 2H15" fill="none" stroke="#e0b93a" stroke-width=".8"/></svg>
<div style="left:92.5px;top:691px;height:14px;line-height:14px;color:#222">工艺路线</div>
<div style="left:58px;top:708px;width:10px;height:10px;border:2px solid #cfcfcf;background:#fff"></div>
<div style="left:60px;top:712px;width:6px;height:2px;background:#a5a5a5"></div>
<div style="left:76px;top:708px;width:12.5px;height:12px;border:2px solid #1a1a1a;background:#fff"></div>
<svg style="position:absolute;left:91px;top:705.5px" width="16" height="16" viewBox="0 0 16 16"><path d="M1 3.5h5l1.5 2H15v8.5H1z" fill="#f5d55a"/><path d="M1 6h14v8H1z" fill="#fbe98e"/><path d="M1 3.5h5l1.5 2H15" fill="none" stroke="#e0b93a" stroke-width=".8"/></svg>
<div class="n" style="left:111px;top:707px;height:14px;line-height:14px;color:#222">01(01)</div>
<div style="left:128.5px;top:755.1px;width:87.5px;height:15px;background:#d6d3cc"></div>
<div style="left:95px;top:724px;width:12.5px;height:12px;border:2px solid #1a1a1a;background:#fff"></div>
<svg style="position:absolute;left:111.5px;top:722px" width="14" height="16" viewBox="0 0 15 16"><path d="M2 1h8l3 3v11H2z" fill="#eef4fc" stroke="#8fb0dc" stroke-width="1"/><path d="M10 1v3h3" fill="#cfe0f5" stroke="#8fb0dc" stroke-width=".8"/><path d="M4.5 9.5l2.3 2.8L11.5 6" fill="none" stroke="#d8202a" stroke-width="2"/></svg>
<div style="left:131px;top:723px;width:84.5px;height:14px;overflow:hidden"><div class="n" style="left:0;top:0;height:14px;line-height:14px;color:#222">16050400001(16050400001</div></div>
<div style="left:95px;top:740px;width:12.5px;height:12px;border:2px solid #1a1a1a;background:#fff"></div>
<svg style="position:absolute;left:111.5px;top:738px" width="14" height="16" viewBox="0 0 15 16"><path d="M2 1h8l3 3v11H2z" fill="#eef4fc" stroke="#8fb0dc" stroke-width="1"/><path d="M10 1v3h3" fill="#cfe0f5" stroke="#8fb0dc" stroke-width=".8"/><path d="M4.5 9.5l2.3 2.8L11.5 6" fill="none" stroke="#d8202a" stroke-width="2"/></svg>
<div style="left:131px;top:739px;width:84.5px;height:14px;overflow:hidden"><div class="n" style="left:0;top:0;height:14px;line-height:14px;color:#222">16050400002(16050400002</div></div>
<div style="left:95px;top:756px;width:12.5px;height:12px;border:2px solid #1a1a1a;background:#fff"></div>
<svg style="position:absolute;left:111.5px;top:754.6px" width="14" height="16" viewBox="0 0 15 16"><path d="M2 1h8l3 3v11H2z" fill="#eef4fc" stroke="#8fb0dc" stroke-width="1"/><path d="M10 1v3h3" fill="#cfe0f5" stroke="#8fb0dc" stroke-width=".8"/><path d="M4.5 9.5l2.3 2.8L11.5 6" fill="none" stroke="#d8202a" stroke-width="2"/></svg>
<div style="left:131px;top:755.6px;width:84.5px;height:14px;overflow:hidden"><div class="n" style="left:0;top:0;height:14px;line-height:14px;color:#222">16050400003(16050400003</div></div>
<div style="left:222.5px;top:688.2px;width:874px;height:20.8px;background:linear-gradient(#dedbd4,#d0cdc5)"></div>
<div style="left:290px;top:688.2px;width:2px;height:20.8px;background:#c0bdb6"></div>
<div style="left:223.5px;top:688.2px;width:1px;height:20.8px;background:#ebe9e4"></div>
<div style="left:222.5px;top:688.2px;width:69px;height:20.8px;overflow:hidden"><div style="left:-20px;width:109px;top:4px;height:14px;line-height:14px;text-align:center;color:#222">物料代码</div></div>
<div style="left:362px;top:688.2px;width:2px;height:20.8px;background:#c0bdb6"></div>
<div style="left:292.5px;top:688.2px;width:1px;height:20.8px;background:#ebe9e4"></div>
<div style="left:291.5px;top:688.2px;width:71.5px;height:20.8px;overflow:hidden"><div style="left:-20px;width:111.5px;top:4px;height:14px;line-height:14px;text-align:center;color:#222">物料名称</div></div>
<div style="left:406px;top:688.2px;width:2px;height:20.8px;background:#c0bdb6"></div>
<div style="left:364px;top:688.2px;width:1px;height:20.8px;background:#ebe9e4"></div>
<div style="left:363px;top:688.2px;width:45px;height:20.8px;overflow:hidden"><div style="left:-20px;width:85px;top:4px;height:14px;line-height:14px;text-align:center;color:#222">单位</div></div>
<div style="left:476px;top:688.2px;width:2px;height:20.8px;background:#c0bdb6"></div>
<div style="left:409px;top:688.2px;width:1px;height:20.8px;background:#ebe9e4"></div>
<div style="left:408px;top:688.2px;width:69px;height:20.8px;overflow:hidden"><div style="left:-20px;width:109px;top:4px;height:14px;line-height:14px;text-align:center;color:#222">规格型号</div></div>
<div style="left:522px;top:688.2px;width:2px;height:20.8px;background:#c0bdb6"></div>
<div style="left:478px;top:688.2px;width:1px;height:20.8px;background:#ebe9e4"></div>
<div style="left:477px;top:688.2px;width:46px;height:20.8px;overflow:hidden"><div style="left:-20px;width:86px;top:4px;height:14px;line-height:14px;text-align:center;color:#222">编号</div></div>
<div style="left:616px;top:688.2px;width:2px;height:20.8px;background:#c0bdb6"></div>
<div style="left:524px;top:688.2px;width:1px;height:20.8px;background:#ebe9e4"></div>
<div style="left:523px;top:688.2px;width:95.5px;height:20.8px;overflow:hidden"><div style="left:-20px;width:135.5px;top:4px;height:14px;line-height:14px;text-align:center;color:#222">工艺路线组别</div></div>
<div style="left:724px;top:688.2px;width:2px;height:20.8px;background:#c0bdb6"></div>
<div style="left:619.5px;top:688.2px;width:1px;height:20.8px;background:#ebe9e4"></div>
<div style="left:618.5px;top:688.2px;width:107px;height:20.8px;overflow:hidden"><div style="left:-20px;width:147px;top:4px;height:14px;line-height:14px;text-align:center;color:#222">是否按顺序加工</div></div>
<div style="left:794px;top:688.2px;width:2px;height:20.8px;background:#c0bdb6"></div>
<div style="left:726.5px;top:688.2px;width:1px;height:20.8px;background:#ebe9e4"></div>
<div style="left:725.5px;top:688.2px;width:70.5px;height:20.8px;overflow:hidden"><div style="left:-20px;width:110.5px;top:4px;height:14px;line-height:14px;text-align:center;color:#222">是否默认</div></div>
<div style="left:838px;top:688.2px;width:2px;height:20.8px;background:#c0bdb6"></div>
<div style="left:797px;top:688.2px;width:1px;height:20.8px;background:#ebe9e4"></div>
<div style="left:796px;top:688.2px;width:44.5px;height:20.8px;overflow:hidden"><div style="left:-20px;width:84.5px;top:4px;height:14px;line-height:14px;text-align:center;color:#222">备注</div></div>
<div style="left:896px;top:688.2px;width:2px;height:20.8px;background:#c0bdb6"></div>
<div style="left:841.5px;top:688.2px;width:1px;height:20.8px;background:#ebe9e4"></div>
<div style="left:840.5px;top:688.2px;width:57px;height:20.8px;overflow:hidden"><div style="left:-20px;width:97px;top:4px;height:14px;line-height:14px;text-align:center;color:#222">审核人</div></div>
<div style="left:966px;top:688.2px;width:2px;height:20.8px;background:#c0bdb6"></div>
<div style="left:898.5px;top:688.2px;width:1px;height:20.8px;background:#ebe9e4"></div>
<div style="left:897.5px;top:688.2px;width:70px;height:20.8px;overflow:hidden"><div style="left:-20px;width:110px;top:4px;height:14px;line-height:14px;text-align:center;color:#222">审核日期</div></div>
<div style="left:1022px;top:688.2px;width:2px;height:20.8px;background:#c0bdb6"></div>
<div style="left:968.5px;top:688.2px;width:1px;height:20.8px;background:#ebe9e4"></div>
<div style="left:967.5px;top:688.2px;width:56.5px;height:20.8px;overflow:hidden"><div style="left:-20px;width:96.5px;top:4px;height:14px;line-height:14px;text-align:center;color:#222">制单人</div></div>
<div style="left:1094px;top:688.2px;width:2px;height:20.8px;background:#c0bdb6"></div>
<div style="left:1025px;top:688.2px;width:1px;height:20.8px;background:#ebe9e4"></div>
<div style="left:1024px;top:688.2px;width:72.5px;height:20.8px;overflow:hidden"><div style="left:-20px;width:112.5px;top:4px;height:14px;line-height:14px;text-align:center;color:#222">制单日期</div></div>
<div style="left:222.5px;top:708px;width:874px;height:2px;background:#bebbb3"></div>
<div style="left:222.5px;top:728px;width:874px;height:2px;background:#e4e4e4"></div>
<div style="left:290px;top:709px;width:2px;height:20.5px;background:#e0e0e0"></div>
<div style="left:222.5px;top:709px;width:68px;height:20.5px;overflow:hidden"><div class="n" style="left:0.5px;top:3.25px;height:14px;line-height:14px;color:#333">16050400003</div></div>
<div style="left:362px;top:709px;width:2px;height:20.5px;background:#e0e0e0"></div>
<div style="left:291.5px;top:709px;width:70.5px;height:20.5px;overflow:hidden"><div class="n" style="left:0.5px;top:3.25px;height:14px;line-height:14px;color:#333">16050400003</div></div>
<div style="left:406px;top:709px;width:2px;height:20.5px;background:#e0e0e0"></div>
<div style="left:363px;top:709px;width:44px;height:20.5px;overflow:hidden"><div class="n" style="left:0.5px;top:3.25px;height:14px;line-height:14px;color:#333">PCS</div></div>
<div style="left:476px;top:709px;width:2px;height:20.5px;background:#e0e0e0"></div>
<div style="left:522px;top:709px;width:2px;height:20.5px;background:#e0e0e0"></div>
<div style="left:477px;top:709px;width:45px;height:20.5px;overflow:hidden"><div class="n" style="left:0.5px;top:3.25px;height:14px;line-height:14px;color:#333">GTLZ000003</div></div>
<div style="left:616px;top:709px;width:2px;height:20.5px;background:#e0e0e0"></div>
<div style="left:523px;top:709px;width:94.5px;height:20.5px;overflow:hidden"><div class="n" style="left:0.5px;top:3.25px;height:14px;line-height:14px;color:#333">01</div></div>
<div style="left:724px;top:709px;width:2px;height:20.5px;background:#e0e0e0"></div>
<div style="left:618.5px;top:709px;width:106px;height:20.5px;overflow:hidden"><div class="" style="left:0.5px;top:3.25px;height:14px;line-height:14px;color:#0a0a0a;font-weight:500">否</div></div>
<div style="left:794px;top:709px;width:2px;height:20.5px;background:#e0e0e0"></div>
<div style="left:725.5px;top:709px;width:69.5px;height:20.5px;overflow:hidden"><div class="" style="left:0.5px;top:3.25px;height:14px;line-height:14px;color:#0a0a0a;font-weight:500">否</div></div>
<div style="left:838px;top:709px;width:2px;height:20.5px;background:#e0e0e0"></div>
<div style="left:896px;top:709px;width:2px;height:20.5px;background:#e0e0e0"></div>
<div style="left:840.5px;top:709px;width:56px;height:20.5px;overflow:hidden"><div class="n" style="left:0.5px;top:3.25px;height:14px;line-height:14px;color:#333">Administrator</div></div>
<div style="left:966px;top:709px;width:2px;height:20.5px;background:#e0e0e0"></div>
<div style="left:897.5px;top:709px;width:69px;height:20.5px;overflow:hidden"><div class="n" style="left:0.5px;top:3.25px;height:14px;line-height:14px;color:#333">2019-05-28</div></div>
<div style="left:1022px;top:709px;width:2px;height:20.5px;background:#e0e0e0"></div>
<div style="left:967.5px;top:709px;width:55.5px;height:20.5px;overflow:hidden"><div class="n" style="left:0.5px;top:3.25px;height:14px;line-height:14px;color:#333">Administrator</div></div>
<div style="left:1094px;top:709px;width:2px;height:20.5px;background:#e0e0e0"></div>
<div style="left:1024px;top:709px;width:71.5px;height:20.5px;overflow:hidden"><div class="n" style="left:0.5px;top:3.25px;height:14px;line-height:14px;color:#333">2019-05-28</div></div>
<div style="left:222.5px;top:729.5px;width:874px;height:20.5px;background:#0a246a"></div>
<div style="left:290px;top:729.5px;width:2px;height:20.5px;background:#6a79a8"></div>
<div style="left:222.5px;top:729.5px;width:68px;height:20.5px;overflow:hidden"><div class="n" style="left:0.5px;top:3.25px;height:14px;line-height:14px;color:#fff;font-weight:bold;letter-spacing:-0.36px">16050400003</div></div>
<div style="left:362px;top:729.5px;width:2px;height:20.5px;background:#6a79a8"></div>
<div style="left:291.5px;top:729.5px;width:70.5px;height:20.5px;overflow:hidden"><div class="n" style="left:0.5px;top:3.25px;height:14px;line-height:14px;color:#fff;font-weight:bold;letter-spacing:-0.36px">16050400003</div></div>
<div style="left:406px;top:729.5px;width:2px;height:20.5px;background:#6a79a8"></div>
<div style="left:363px;top:729.5px;width:44px;height:20.5px;overflow:hidden"><div class="n" style="left:0.5px;top:3.25px;height:14px;line-height:14px;color:#fff;font-weight:bold;letter-spacing:-0.36px">PCS</div></div>
<div style="left:476px;top:729.5px;width:2px;height:20.5px;background:#6a79a8"></div>
<div style="left:522px;top:729.5px;width:2px;height:20.5px;background:#6a79a8"></div>
<div style="left:477px;top:729.5px;width:45px;height:20.5px;overflow:hidden"><div class="n" style="left:0.5px;top:3.25px;height:14px;line-height:14px;color:#fff;font-weight:bold;letter-spacing:-0.36px">GTLZ000004</div></div>
<div style="left:616px;top:729.5px;width:2px;height:20.5px;background:#6a79a8"></div>
<div style="left:523px;top:729.5px;width:94.5px;height:20.5px;overflow:hidden"><div class="n" style="left:0.5px;top:3.25px;height:14px;line-height:14px;color:#fff;font-weight:bold;letter-spacing:-0.36px">01</div></div>
<div style="left:724px;top:729.5px;width:2px;height:20.5px;background:#6a79a8"></div>
<div style="left:618.5px;top:729.5px;width:106px;height:20.5px;overflow:hidden"><div class="" style="left:0.5px;top:3.25px;height:14px;line-height:14px;color:#fff;font-weight:bold">否</div></div>
<div style="left:794px;top:729.5px;width:2px;height:20.5px;background:#6a79a8"></div>
<div style="left:725.5px;top:729.5px;width:69.5px;height:20.5px;overflow:hidden"><div class="" style="left:0.5px;top:3.25px;height:14px;line-height:14px;color:#fff;font-weight:bold">是</div></div>
<div style="left:838px;top:729.5px;width:2px;height:20.5px;background:#6a79a8"></div>
<div style="left:896px;top:729.5px;width:2px;height:20.5px;background:#6a79a8"></div>
<div style="left:840.5px;top:729.5px;width:56px;height:20.5px;overflow:hidden"><div class="n" style="left:0.5px;top:3.25px;height:14px;line-height:14px;color:#fff;font-weight:bold;letter-spacing:-0.36px">Administrator</div></div>
<div style="left:966px;top:729.5px;width:2px;height:20.5px;background:#6a79a8"></div>
<div style="left:897.5px;top:729.5px;width:69px;height:20.5px;overflow:hidden"><div class="n" style="left:0.5px;top:3.25px;height:14px;line-height:14px;color:#fff;font-weight:bold;letter-spacing:-0.36px">2019-05-31</div></div>
<div style="left:1022px;top:729.5px;width:2px;height:20.5px;background:#6a79a8"></div>
<div style="left:967.5px;top:729.5px;width:55.5px;height:20.5px;overflow:hidden"><div class="n" style="left:0.5px;top:3.25px;height:14px;line-height:14px;color:#fff;font-weight:bold;letter-spacing:-0.36px">Administrator</div></div>
<div style="left:1094px;top:729.5px;width:2px;height:20.5px;background:#6a79a8"></div>
<div style="left:1024px;top:729.5px;width:71.5px;height:20.5px;overflow:hidden"><div class="n" style="left:0.5px;top:3.25px;height:14px;line-height:14px;color:#fff;font-weight:bold;letter-spacing:-0.36px">2019-05-31</div></div>
<div style="left:222.7px;top:985.5px;width:1396.8px;height:5.5px;background:#dfdcd5"></div>
<div style="left:222.7px;top:991px;width:1396.8px;height:1.4px;background:#8f8c86"></div>
<div style="left:222.5px;top:992.3px;width:1457.5px;height:20.8px;background:linear-gradient(#dedbd4,#d0cdc5)"></div>
<div style="left:252px;top:992.3px;width:2px;height:20.8px;background:#c0bdb6"></div>
<div style="left:223.5px;top:992.3px;width:1px;height:20.8px;background:#ebe9e4"></div>
<div style="left:222.5px;top:992.3px;width:32px;height:20.8px;overflow:hidden"><div style="left:-20px;width:72px;top:4px;height:14px;line-height:14px;text-align:center;color:#222">顺序号</div></div>
<div style="left:322px;top:992.3px;width:2px;height:20.8px;background:#c0bdb6"></div>
<div style="left:255.5px;top:992.3px;width:1px;height:20.8px;background:#ebe9e4"></div>
<div style="left:254.5px;top:992.3px;width:68.5px;height:20.8px;overflow:hidden"><div style="left:-20px;width:108.5px;top:4px;height:14px;line-height:14px;text-align:center;color:#222">工序代码</div></div>
<div style="left:392px;top:992.3px;width:2px;height:20.8px;background:#c0bdb6"></div>
<div style="left:324px;top:992.3px;width:1px;height:20.8px;background:#ebe9e4"></div>
<div style="left:323px;top:992.3px;width:71px;height:20.8px;overflow:hidden"><div style="left:-20px;width:111px;top:4px;height:14px;line-height:14px;text-align:center;color:#222">工序名称</div></div>
<div style="left:462px;top:992.3px;width:2px;height:20.8px;background:#c0bdb6"></div>
<div style="left:395px;top:992.3px;width:1px;height:20.8px;background:#ebe9e4"></div>
<div style="left:394px;top:992.3px;width:70.5px;height:20.8px;overflow:hidden"><div style="left:-20px;width:110.5px;top:4px;height:14px;line-height:14px;text-align:center;color:#222">加工说明</div></div>
<div style="left:512px;top:992.3px;width:2px;height:20.8px;background:#c0bdb6"></div>
<div style="left:465.5px;top:992.3px;width:1px;height:20.8px;background:#ebe9e4"></div>
<div style="left:464.5px;top:992.3px;width:48.5px;height:20.8px;overflow:hidden"><div style="left:-20px;width:88.5px;top:4px;height:14px;line-height:14px;text-align:center;color:#222">工作中心代码</div></div>
<div style="left:606px;top:992.3px;width:2px;height:20.8px;background:#c0bdb6"></div>
<div style="left:514px;top:992.3px;width:1px;height:20.8px;background:#ebe9e4"></div>
<div style="left:513px;top:992.3px;width:94.5px;height:20.8px;overflow:hidden"><div style="left:-20px;width:134.5px;top:4px;height:14px;line-height:14px;text-align:center;color:#222">工作中心名称</div></div>
<div style="left:700px;top:992.3px;width:2px;height:20.8px;background:#c0bdb6"></div>
<div style="left:608.5px;top:992.3px;width:1px;height:20.8px;background:#ebe9e4"></div>
<div style="left:607.5px;top:992.3px;width:94.5px;height:20.8px;overflow:hidden"><div style="left:-20px;width:134.5px;top:4px;height:14px;line-height:14px;text-align:center;color:#222">工作中心部门</div></div>
<div style="left:746px;top:992.3px;width:2px;height:20.8px;background:#c0bdb6"></div>
<div style="left:703px;top:992.3px;width:1px;height:20.8px;background:#ebe9e4"></div>
<div style="left:702px;top:992.3px;width:45.5px;height:20.8px;overflow:hidden"><div style="left:-20px;width:85.5px;top:4px;height:14px;line-height:14px;text-align:center;color:#222">班组</div></div>
<div style="left:802px;top:992.3px;width:2px;height:20.8px;background:#c0bdb6"></div>
<div style="left:748.5px;top:992.3px;width:1px;height:20.8px;background:#ebe9e4"></div>
<div style="left:747.5px;top:992.3px;width:56.5px;height:20.8px;overflow:hidden"><div style="left:-20px;width:96.5px;top:4px;height:14px;line-height:14px;text-align:center;color:#222">操作工</div></div>
<div style="left:848px;top:992.3px;width:2px;height:20.8px;background:#c0bdb6"></div>
<div style="left:805px;top:992.3px;width:1px;height:20.8px;background:#ebe9e4"></div>
<div style="left:804px;top:992.3px;width:46.5px;height:20.8px;overflow:hidden"><div style="left:-20px;width:86.5px;top:4px;height:14px;line-height:14px;text-align:center;color:#222">工种</div></div>
<div style="left:918px;top:992.3px;width:2px;height:20.8px;background:#c0bdb6"></div>
<div style="left:851.5px;top:992.3px;width:1px;height:20.8px;background:#ebe9e4"></div>
<div style="left:850.5px;top:992.3px;width:70px;height:20.8px;overflow:hidden"><div style="left:-20px;width:110px;top:4px;height:14px;line-height:14px;text-align:center;color:#222">时间单位</div></div>
<div style="left:988px;top:992.3px;width:2px;height:20.8px;background:#c0bdb6"></div>
<div style="left:921.5px;top:992.3px;width:1px;height:20.8px;background:#ebe9e4"></div>
<div style="left:920.5px;top:992.3px;width:70px;height:20.8px;overflow:hidden"><div style="left:-20px;width:110px;top:4px;height:14px;line-height:14px;text-align:center;color:#222">标准工时</div></div>
<div style="left:1084px;top:992.3px;width:2px;height:20.8px;background:#c0bdb6"></div>
<div style="left:991.5px;top:992.3px;width:1px;height:20.8px;background:#ebe9e4"></div>
<div style="left:990.5px;top:992.3px;width:95px;height:20.8px;overflow:hidden"><div style="left:-20px;width:135px;top:4px;height:14px;line-height:14px;text-align:center;color:#222">是否末道工序</div></div>
<div style="left:1152px;top:992.3px;width:2px;height:20.8px;background:#c0bdb6"></div>
<div style="left:1086.5px;top:992.3px;width:1px;height:20.8px;background:#ebe9e4"></div>
<div style="left:1085.5px;top:992.3px;width:69px;height:20.8px;overflow:hidden"><div style="left:-20px;width:109px;top:4px;height:14px;line-height:14px;text-align:center;color:#222">是否检验</div></div>
<div style="left:1212px;top:992.3px;width:2px;height:20.8px;background:#c0bdb6"></div>
<div style="left:1155.5px;top:992.3px;width:1px;height:20.8px;background:#ebe9e4"></div>
<div style="left:1154.5px;top:992.3px;width:60px;height:20.8px;overflow:hidden"><div style="left:-20px;width:100px;top:4px;height:14px;line-height:14px;text-align:center;color:#222">加工费</div></div>
<div style="left:1270px;top:992.3px;width:2px;height:20.8px;background:#c0bdb6"></div>
<div style="left:1215.5px;top:992.3px;width:1px;height:20.8px;background:#ebe9e4"></div>
<div style="left:1214.5px;top:992.3px;width:58px;height:20.8px;overflow:hidden"><div style="left:-20px;width:98px;top:4px;height:14px;line-height:14px;text-align:center;color:#222">供应商</div></div>
<div style="left:1366px;top:992.3px;width:2px;height:20.8px;background:#c0bdb6"></div>
<div style="left:1273.5px;top:992.3px;width:1px;height:20.8px;background:#ebe9e4"></div>
<div style="left:1272.5px;top:992.3px;width:95px;height:20.8px;overflow:hidden"><div style="left:-20px;width:135px;top:4px;height:14px;line-height:14px;text-align:center;color:#222">单位计件工资</div></div>
<div style="left:1460px;top:992.3px;width:2px;height:20.8px;background:#c0bdb6"></div>
<div style="left:1368.5px;top:992.3px;width:1px;height:20.8px;background:#ebe9e4"></div>
<div style="left:1367.5px;top:992.3px;width:94px;height:20.8px;overflow:hidden"><div style="left:-20px;width:134px;top:4px;height:14px;line-height:14px;text-align:center;color:#222">单位计时工资</div></div>
<div style="left:1506px;top:992.3px;width:2px;height:20.8px;background:#c0bdb6"></div>
<div style="left:1462.5px;top:992.3px;width:1px;height:20.8px;background:#ebe9e4"></div>
<div style="left:1461.5px;top:992.3px;width:46px;height:20.8px;overflow:hidden"><div style="left:-20px;width:86px;top:4px;height:14px;line-height:14px;text-align:center;color:#222">设备</div></div>
<div style="left:1576px;top:992.3px;width:2px;height:20.8px;background:#c0bdb6"></div>
<div style="left:1508.5px;top:992.3px;width:1px;height:20.8px;background:#ebe9e4"></div>
<div style="left:1507.5px;top:992.3px;width:70px;height:20.8px;overflow:hidden"><div style="left:-20px;width:110px;top:4px;height:14px;line-height:14px;text-align:center;color:#222">产出比例</div></div>
<div style="left:1678px;top:992.3px;width:2px;height:20.8px;background:#c0bdb6"></div>
<div style="left:1578.5px;top:992.3px;width:1px;height:20.8px;background:#ebe9e4"></div>
<div style="left:1577.5px;top:992.3px;width:102.5px;height:20.8px;overflow:hidden"><div style="left:-20px;width:142.5px;top:4px;height:14px;line-height:14px;text-align:center;color:#222">前置工序顺序号</div></div>
<div style="left:222.5px;top:1012px;width:1457.5px;height:2px;background:#bebbb3"></div>
<div style="left:222.5px;top:1013.1px;width:1457.5px;height:20.8px;background:#0a246a"></div>
<div style="left:252px;top:1013.1px;width:2px;height:20.8px;background:#6a79a8"></div>
<div style="left:222.5px;top:1013.1px;width:31px;height:20.8px;overflow:hidden"><div class="n" style="left:0.5px;top:3.4px;height:14px;line-height:14px;color:#fff;font-weight:bold;letter-spacing:-0.36px">1</div></div>
<div style="left:322px;top:1013.1px;width:2px;height:20.8px;background:#6a79a8"></div>
<div style="left:254.5px;top:1013.1px;width:67.5px;height:20.8px;overflow:hidden"><div class="n" style="left:0.5px;top:3.4px;height:14px;line-height:14px;color:#fff;font-weight:bold;letter-spacing:-0.36px">001</div></div>
<div style="left:392px;top:1013.1px;width:2px;height:20.8px;background:#6a79a8"></div>
<div style="left:323px;top:1013.1px;width:70px;height:20.8px;overflow:hidden"><div class="" style="left:0.5px;top:3.4px;height:14px;line-height:14px;color:#fff;font-weight:bold">铣</div></div>
<div style="left:462px;top:1013.1px;width:2px;height:20.8px;background:#6a79a8"></div>
<div style="left:512px;top:1013.1px;width:2px;height:20.8px;background:#6a79a8"></div>
<div style="left:464.5px;top:1013.1px;width:47.5px;height:20.8px;overflow:hidden"><div class="n" style="left:0.5px;top:3.4px;height:14px;line-height:14px;color:#fff;font-weight:bold;letter-spacing:-0.36px">001</div></div>
<div style="left:606px;top:1013.1px;width:2px;height:20.8px;background:#6a79a8"></div>
<div style="left:513px;top:1013.1px;width:93.5px;height:20.8px;overflow:hidden"><div class="" style="left:0.5px;top:3.4px;height:14px;line-height:14px;color:#fff;font-weight:bold">铣</div></div>
<div style="left:700px;top:1013.1px;width:2px;height:20.8px;background:#6a79a8"></div>
<div style="left:607.5px;top:1013.1px;width:93.5px;height:20.8px;overflow:hidden"><div class="" style="left:0.5px;top:3.4px;height:14px;line-height:14px;color:#fff;font-weight:bold">1车间</div></div>
<div style="left:746px;top:1013.1px;width:2px;height:20.8px;background:#6a79a8"></div>
<div style="left:802px;top:1013.1px;width:2px;height:20.8px;background:#6a79a8"></div>
<div style="left:848px;top:1013.1px;width:2px;height:20.8px;background:#6a79a8"></div>
<div style="left:804px;top:1013.1px;width:45.5px;height:20.8px;overflow:hidden"><div class="n" style="left:0.5px;top:3.4px;height:14px;line-height:14px;color:#fff;font-weight:bold;letter-spacing:-0.36px">*</div></div>
<div style="left:918px;top:1013.1px;width:2px;height:20.8px;background:#6a79a8"></div>
<div style="left:850.5px;top:1013.1px;width:69px;height:20.8px;overflow:hidden"><div class="" style="left:0.5px;top:3.4px;height:14px;line-height:14px;color:#fff;font-weight:bold">分钟</div></div>
<div style="left:988px;top:1013.1px;width:2px;height:20.8px;background:#6a79a8"></div>
<div style="left:920.5px;top:1013.1px;width:69px;height:20.8px;overflow:hidden"><div class="n" style="right:3px;top:3.4px;height:14px;line-height:14px;color:#fff;font-weight:bold;letter-spacing:-0.36px">2.00</div></div>
<div style="left:1084px;top:1013.1px;width:2px;height:20.8px;background:#6a79a8"></div>
<div style="left:990.5px;top:1013.1px;width:94px;height:20.8px;overflow:hidden"><div class="" style="left:0.5px;top:3.4px;height:14px;line-height:14px;color:#fff;font-weight:bold">否</div></div>
<div style="left:1152px;top:1013.1px;width:2px;height:20.8px;background:#6a79a8"></div>
<div style="left:1085.5px;top:1013.1px;width:68px;height:20.8px;overflow:hidden"><div class="" style="left:0.5px;top:3.4px;height:14px;line-height:14px;color:#fff;font-weight:bold">否</div></div>
<div style="left:1212px;top:1013.1px;width:2px;height:20.8px;background:#6a79a8"></div>
<div style="left:1154.5px;top:1013.1px;width:59px;height:20.8px;overflow:hidden"><div class="n" style="right:3px;top:3.4px;height:14px;line-height:14px;color:#fff;font-weight:bold;letter-spacing:-0.36px">0.00</div></div>
<div style="left:1270px;top:1013.1px;width:2px;height:20.8px;background:#6a79a8"></div>
<div style="left:1366px;top:1013.1px;width:2px;height:20.8px;background:#6a79a8"></div>
<div style="left:1272.5px;top:1013.1px;width:94px;height:20.8px;overflow:hidden"><div class="n" style="right:3px;top:3.4px;height:14px;line-height:14px;color:#fff;font-weight:bold;letter-spacing:-0.36px">4.00</div></div>
<div style="left:1460px;top:1013.1px;width:2px;height:20.8px;background:#6a79a8"></div>
<div style="left:1367.5px;top:1013.1px;width:93px;height:20.8px;overflow:hidden"><div class="n" style="right:3px;top:3.4px;height:14px;line-height:14px;color:#fff;font-weight:bold;letter-spacing:-0.36px">6.00</div></div>
<div style="left:1506px;top:1013.1px;width:2px;height:20.8px;background:#6a79a8"></div>
<div style="left:1576px;top:1013.1px;width:2px;height:20.8px;background:#6a79a8"></div>
<div style="left:1507.5px;top:1013.1px;width:69px;height:20.8px;overflow:hidden"><div class="n" style="right:3px;top:3.4px;height:14px;line-height:14px;color:#fff;font-weight:bold;letter-spacing:-0.36px">1.00</div></div>
<div style="left:1678px;top:1013.1px;width:2px;height:20.8px;background:#6a79a8"></div>
<div style="left:222.5px;top:1052px;width:1457.5px;height:2px;background:#e4e4e4"></div>
<div style="left:252px;top:1033.9px;width:2px;height:20.8px;background:#e0e0e0"></div>
<div style="left:222.5px;top:1033.9px;width:31px;height:20.8px;overflow:hidden"><div class="n" style="left:0.5px;top:3.4px;height:14px;line-height:14px;color:#333">2</div></div>
<div style="left:322px;top:1033.9px;width:2px;height:20.8px;background:#e0e0e0"></div>
<div style="left:254.5px;top:1033.9px;width:67.5px;height:20.8px;overflow:hidden"><div class="n" style="left:0.5px;top:3.4px;height:14px;line-height:14px;color:#333">002</div></div>
<div style="left:392px;top:1033.9px;width:2px;height:20.8px;background:#e0e0e0"></div>
<div style="left:323px;top:1033.9px;width:70px;height:20.8px;overflow:hidden"><div class="" style="left:0.5px;top:3.4px;height:14px;line-height:14px;color:#0a0a0a;font-weight:500">车</div></div>
<div style="left:462px;top:1033.9px;width:2px;height:20.8px;background:#e0e0e0"></div>
<div style="left:512px;top:1033.9px;width:2px;height:20.8px;background:#e0e0e0"></div>
<div style="left:464.5px;top:1033.9px;width:47.5px;height:20.8px;overflow:hidden"><div class="n" style="left:0.5px;top:3.4px;height:14px;line-height:14px;color:#333">002</div></div>
<div style="left:606px;top:1033.9px;width:2px;height:20.8px;background:#e0e0e0"></div>
<div style="left:513px;top:1033.9px;width:93.5px;height:20.8px;overflow:hidden"><div class="" style="left:0.5px;top:3.4px;height:14px;line-height:14px;color:#0a0a0a;font-weight:500">车</div></div>
<div style="left:700px;top:1033.9px;width:2px;height:20.8px;background:#e0e0e0"></div>
<div style="left:607.5px;top:1033.9px;width:93.5px;height:20.8px;overflow:hidden"><div class="" style="left:0.5px;top:3.4px;height:14px;line-height:14px;color:#0a0a0a;font-weight:500">1车间</div></div>
<div style="left:746px;top:1033.9px;width:2px;height:20.8px;background:#e0e0e0"></div>
<div style="left:802px;top:1033.9px;width:2px;height:20.8px;background:#e0e0e0"></div>
<div style="left:848px;top:1033.9px;width:2px;height:20.8px;background:#e0e0e0"></div>
<div style="left:804px;top:1033.9px;width:45.5px;height:20.8px;overflow:hidden"><div class="n" style="left:0.5px;top:3.4px;height:14px;line-height:14px;color:#333">*</div></div>
<div style="left:918px;top:1033.9px;width:2px;height:20.8px;background:#e0e0e0"></div>
<div style="left:850.5px;top:1033.9px;width:69px;height:20.8px;overflow:hidden"><div class="" style="left:0.5px;top:3.4px;height:14px;line-height:14px;color:#0a0a0a;font-weight:500">分钟</div></div>
<div style="left:988px;top:1033.9px;width:2px;height:20.8px;background:#e0e0e0"></div>
<div style="left:920.5px;top:1033.9px;width:69px;height:20.8px;overflow:hidden"><div class="n" style="right:3px;top:3.4px;height:14px;line-height:14px;color:#333">3.00</div></div>
<div style="left:1084px;top:1033.9px;width:2px;height:20.8px;background:#e0e0e0"></div>
<div style="left:990.5px;top:1033.9px;width:94px;height:20.8px;overflow:hidden"><div class="" style="left:0.5px;top:3.4px;height:14px;line-height:14px;color:#0a0a0a;font-weight:500">否</div></div>
<div style="left:1152px;top:1033.9px;width:2px;height:20.8px;background:#e0e0e0"></div>
<div style="left:1085.5px;top:1033.9px;width:68px;height:20.8px;overflow:hidden"><div class="" style="left:0.5px;top:3.4px;height:14px;line-height:14px;color:#0a0a0a;font-weight:500">是</div></div>
<div style="left:1212px;top:1033.9px;width:2px;height:20.8px;background:#e0e0e0"></div>
<div style="left:1154.5px;top:1033.9px;width:59px;height:20.8px;overflow:hidden"><div class="n" style="right:3px;top:3.4px;height:14px;line-height:14px;color:#333">0.00</div></div>
<div style="left:1270px;top:1033.9px;width:2px;height:20.8px;background:#e0e0e0"></div>
<div style="left:1366px;top:1033.9px;width:2px;height:20.8px;background:#e0e0e0"></div>
<div style="left:1272.5px;top:1033.9px;width:94px;height:20.8px;overflow:hidden"><div class="n" style="right:3px;top:3.4px;height:14px;line-height:14px;color:#333">4.00</div></div>
<div style="left:1460px;top:1033.9px;width:2px;height:20.8px;background:#e0e0e0"></div>
<div style="left:1367.5px;top:1033.9px;width:93px;height:20.8px;overflow:hidden"><div class="n" style="right:3px;top:3.4px;height:14px;line-height:14px;color:#333">6.00</div></div>
<div style="left:1506px;top:1033.9px;width:2px;height:20.8px;background:#e0e0e0"></div>
<div style="left:1576px;top:1033.9px;width:2px;height:20.8px;background:#e0e0e0"></div>
<div style="left:1507.5px;top:1033.9px;width:69px;height:20.8px;overflow:hidden"><div class="n" style="right:3px;top:3.4px;height:14px;line-height:14px;color:#333">1.00</div></div>
<div style="left:1678px;top:1033.9px;width:2px;height:20.8px;background:#e0e0e0"></div>
<div style="left:222.5px;top:1074px;width:1457.5px;height:2px;background:#e4e4e4"></div>
<div style="left:252px;top:1054.7px;width:2px;height:20.8px;background:#e0e0e0"></div>
<div style="left:222.5px;top:1054.7px;width:31px;height:20.8px;overflow:hidden"><div class="n" style="left:0.5px;top:3.4px;height:14px;line-height:14px;color:#333">3</div></div>
<div style="left:322px;top:1054.7px;width:2px;height:20.8px;background:#e0e0e0"></div>
<div style="left:254.5px;top:1054.7px;width:67.5px;height:20.8px;overflow:hidden"><div class="n" style="left:0.5px;top:3.4px;height:14px;line-height:14px;color:#333">003</div></div>
<div style="left:392px;top:1054.7px;width:2px;height:20.8px;background:#e0e0e0"></div>
<div style="left:323px;top:1054.7px;width:70px;height:20.8px;overflow:hidden"><div class="" style="left:0.5px;top:3.4px;height:14px;line-height:14px;color:#0a0a0a;font-weight:500">镗</div></div>
<div style="left:462px;top:1054.7px;width:2px;height:20.8px;background:#e0e0e0"></div>
<div style="left:512px;top:1054.7px;width:2px;height:20.8px;background:#e0e0e0"></div>
<div style="left:464.5px;top:1054.7px;width:47.5px;height:20.8px;overflow:hidden"><div class="n" style="left:0.5px;top:3.4px;height:14px;line-height:14px;color:#333">003</div></div>
<div style="left:606px;top:1054.7px;width:2px;height:20.8px;background:#e0e0e0"></div>
<div style="left:513px;top:1054.7px;width:93.5px;height:20.8px;overflow:hidden"><div class="" style="left:0.5px;top:3.4px;height:14px;line-height:14px;color:#0a0a0a;font-weight:500">镗</div></div>
<div style="left:700px;top:1054.7px;width:2px;height:20.8px;background:#e0e0e0"></div>
<div style="left:607.5px;top:1054.7px;width:93.5px;height:20.8px;overflow:hidden"><div class="" style="left:0.5px;top:3.4px;height:14px;line-height:14px;color:#0a0a0a;font-weight:500">1车间</div></div>
<div style="left:746px;top:1054.7px;width:2px;height:20.8px;background:#e0e0e0"></div>
<div style="left:802px;top:1054.7px;width:2px;height:20.8px;background:#e0e0e0"></div>
<div style="left:848px;top:1054.7px;width:2px;height:20.8px;background:#e0e0e0"></div>
<div style="left:804px;top:1054.7px;width:45.5px;height:20.8px;overflow:hidden"><div class="n" style="left:0.5px;top:3.4px;height:14px;line-height:14px;color:#333">*</div></div>
<div style="left:918px;top:1054.7px;width:2px;height:20.8px;background:#e0e0e0"></div>
<div style="left:850.5px;top:1054.7px;width:69px;height:20.8px;overflow:hidden"><div class="" style="left:0.5px;top:3.4px;height:14px;line-height:14px;color:#0a0a0a;font-weight:500">分钟</div></div>
<div style="left:988px;top:1054.7px;width:2px;height:20.8px;background:#e0e0e0"></div>
<div style="left:920.5px;top:1054.7px;width:69px;height:20.8px;overflow:hidden"><div class="n" style="right:3px;top:3.4px;height:14px;line-height:14px;color:#333">4.00</div></div>
<div style="left:1084px;top:1054.7px;width:2px;height:20.8px;background:#e0e0e0"></div>
<div style="left:990.5px;top:1054.7px;width:94px;height:20.8px;overflow:hidden"><div class="" style="left:0.5px;top:3.4px;height:14px;line-height:14px;color:#0a0a0a;font-weight:500">否</div></div>
<div style="left:1152px;top:1054.7px;width:2px;height:20.8px;background:#e0e0e0"></div>
<div style="left:1085.5px;top:1054.7px;width:68px;height:20.8px;overflow:hidden"><div class="" style="left:0.5px;top:3.4px;height:14px;line-height:14px;color:#0a0a0a;font-weight:500">是</div></div>
<div style="left:1212px;top:1054.7px;width:2px;height:20.8px;background:#e0e0e0"></div>
<div style="left:1154.5px;top:1054.7px;width:59px;height:20.8px;overflow:hidden"><div class="n" style="right:3px;top:3.4px;height:14px;line-height:14px;color:#333">0.00</div></div>
<div style="left:1270px;top:1054.7px;width:2px;height:20.8px;background:#e0e0e0"></div>
<div style="left:1366px;top:1054.7px;width:2px;height:20.8px;background:#e0e0e0"></div>
<div style="left:1272.5px;top:1054.7px;width:94px;height:20.8px;overflow:hidden"><div class="n" style="right:3px;top:3.4px;height:14px;line-height:14px;color:#333">4.00</div></div>
<div style="left:1460px;top:1054.7px;width:2px;height:20.8px;background:#e0e0e0"></div>
<div style="left:1367.5px;top:1054.7px;width:93px;height:20.8px;overflow:hidden"><div class="n" style="right:3px;top:3.4px;height:14px;line-height:14px;color:#333">6.00</div></div>
<div style="left:1506px;top:1054.7px;width:2px;height:20.8px;background:#e0e0e0"></div>
<div style="left:1576px;top:1054.7px;width:2px;height:20.8px;background:#e0e0e0"></div>
<div style="left:1507.5px;top:1054.7px;width:69px;height:20.8px;overflow:hidden"><div class="n" style="right:3px;top:3.4px;height:14px;line-height:14px;color:#333">1.00</div></div>
<div style="left:1678px;top:1054.7px;width:2px;height:20.8px;background:#e0e0e0"></div>
<div style="left:222.5px;top:1094px;width:1457.5px;height:2px;background:#e4e4e4"></div>
<div style="left:252px;top:1075.5px;width:2px;height:20.8px;background:#e0e0e0"></div>
<div style="left:222.5px;top:1075.5px;width:31px;height:20.8px;overflow:hidden"><div class="n" style="left:0.5px;top:3.4px;height:14px;line-height:14px;color:#333">4</div></div>
<div style="left:322px;top:1075.5px;width:2px;height:20.8px;background:#e0e0e0"></div>
<div style="left:254.5px;top:1075.5px;width:67.5px;height:20.8px;overflow:hidden"><div class="n" style="left:0.5px;top:3.4px;height:14px;line-height:14px;color:#333">004</div></div>
<div style="left:392px;top:1075.5px;width:2px;height:20.8px;background:#e0e0e0"></div>
<div style="left:323px;top:1075.5px;width:70px;height:20.8px;overflow:hidden"><div class="" style="left:0.5px;top:3.4px;height:14px;line-height:14px;color:#0a0a0a;font-weight:500">磨内孔</div></div>
<div style="left:462px;top:1075.5px;width:2px;height:20.8px;background:#e0e0e0"></div>
<div style="left:512px;top:1075.5px;width:2px;height:20.8px;background:#e0e0e0"></div>
<div style="left:464.5px;top:1075.5px;width:47.5px;height:20.8px;overflow:hidden"><div class="n" style="left:0.5px;top:3.4px;height:14px;line-height:14px;color:#333">004</div></div>
<div style="left:606px;top:1075.5px;width:2px;height:20.8px;background:#e0e0e0"></div>
<div style="left:513px;top:1075.5px;width:93.5px;height:20.8px;overflow:hidden"><div class="" style="left:0.5px;top:3.4px;height:14px;line-height:14px;color:#0a0a0a;font-weight:500">磨</div></div>
<div style="left:700px;top:1075.5px;width:2px;height:20.8px;background:#e0e0e0"></div>
<div style="left:607.5px;top:1075.5px;width:93.5px;height:20.8px;overflow:hidden"><div class="" style="left:0.5px;top:3.4px;height:14px;line-height:14px;color:#0a0a0a;font-weight:500">2车间</div></div>
<div style="left:746px;top:1075.5px;width:2px;height:20.8px;background:#e0e0e0"></div>
<div style="left:802px;top:1075.5px;width:2px;height:20.8px;background:#e0e0e0"></div>
<div style="left:848px;top:1075.5px;width:2px;height:20.8px;background:#e0e0e0"></div>
<div style="left:804px;top:1075.5px;width:45.5px;height:20.8px;overflow:hidden"><div class="n" style="left:0.5px;top:3.4px;height:14px;line-height:14px;color:#333">*</div></div>
<div style="left:918px;top:1075.5px;width:2px;height:20.8px;background:#e0e0e0"></div>
<div style="left:850.5px;top:1075.5px;width:69px;height:20.8px;overflow:hidden"><div class="" style="left:0.5px;top:3.4px;height:14px;line-height:14px;color:#0a0a0a;font-weight:500">分钟</div></div>
<div style="left:988px;top:1075.5px;width:2px;height:20.8px;background:#e0e0e0"></div>
<div style="left:920.5px;top:1075.5px;width:69px;height:20.8px;overflow:hidden"><div class="n" style="right:3px;top:3.4px;height:14px;line-height:14px;color:#333">5.00</div></div>
<div style="left:1084px;top:1075.5px;width:2px;height:20.8px;background:#e0e0e0"></div>
<div style="left:990.5px;top:1075.5px;width:94px;height:20.8px;overflow:hidden"><div class="" style="left:0.5px;top:3.4px;height:14px;line-height:14px;color:#0a0a0a;font-weight:500">否</div></div>
<div style="left:1152px;top:1075.5px;width:2px;height:20.8px;background:#e0e0e0"></div>
<div style="left:1085.5px;top:1075.5px;width:68px;height:20.8px;overflow:hidden"><div class="" style="left:0.5px;top:3.4px;height:14px;line-height:14px;color:#0a0a0a;font-weight:500">否</div></div>
<div style="left:1212px;top:1075.5px;width:2px;height:20.8px;background:#e0e0e0"></div>
<div style="left:1154.5px;top:1075.5px;width:59px;height:20.8px;overflow:hidden"><div class="n" style="right:3px;top:3.4px;height:14px;line-height:14px;color:#333">0.00</div></div>
<div style="left:1270px;top:1075.5px;width:2px;height:20.8px;background:#e0e0e0"></div>
<div style="left:1366px;top:1075.5px;width:2px;height:20.8px;background:#e0e0e0"></div>
<div style="left:1272.5px;top:1075.5px;width:94px;height:20.8px;overflow:hidden"><div class="n" style="right:3px;top:3.4px;height:14px;line-height:14px;color:#333">4.00</div></div>
<div style="left:1460px;top:1075.5px;width:2px;height:20.8px;background:#e0e0e0"></div>
<div style="left:1367.5px;top:1075.5px;width:93px;height:20.8px;overflow:hidden"><div class="n" style="right:3px;top:3.4px;height:14px;line-height:14px;color:#333">6.00</div></div>
<div style="left:1506px;top:1075.5px;width:2px;height:20.8px;background:#e0e0e0"></div>
<div style="left:1576px;top:1075.5px;width:2px;height:20.8px;background:#e0e0e0"></div>
<div style="left:1507.5px;top:1075.5px;width:69px;height:20.8px;overflow:hidden"><div class="n" style="right:3px;top:3.4px;height:14px;line-height:14px;color:#333">1.00</div></div>
<div style="left:1678px;top:1075.5px;width:2px;height:20.8px;background:#e0e0e0"></div>
<div style="left:1577.5px;top:1075.5px;width:101.5px;height:20.8px;overflow:hidden"><div class="n" style="left:0.5px;top:3.4px;height:14px;line-height:14px;color:#333">2,3</div></div>
<div style="left:222.5px;top:1116px;width:1457.5px;height:2px;background:#e4e4e4"></div>
<div style="left:252px;top:1096.3px;width:2px;height:20.8px;background:#e0e0e0"></div>
<div style="left:222.5px;top:1096.3px;width:31px;height:20.8px;overflow:hidden"><div class="n" style="left:0.5px;top:3.4px;height:14px;line-height:14px;color:#333">5</div></div>
<div style="left:322px;top:1096.3px;width:2px;height:20.8px;background:#e0e0e0"></div>
<div style="left:254.5px;top:1096.3px;width:67.5px;height:20.8px;overflow:hidden"><div class="n" style="left:0.5px;top:3.4px;height:14px;line-height:14px;color:#333">005</div></div>
<div style="left:392px;top:1096.3px;width:2px;height:20.8px;background:#e0e0e0"></div>
<div style="left:323px;top:1096.3px;width:70px;height:20.8px;overflow:hidden"><div class="" style="left:0.5px;top:3.4px;height:14px;line-height:14px;color:#0a0a0a;font-weight:500">钻孔</div></div>
<div style="left:462px;top:1096.3px;width:2px;height:20.8px;background:#e0e0e0"></div>
<div style="left:512px;top:1096.3px;width:2px;height:20.8px;background:#e0e0e0"></div>
<div style="left:464.5px;top:1096.3px;width:47.5px;height:20.8px;overflow:hidden"><div class="n" style="left:0.5px;top:3.4px;height:14px;line-height:14px;color:#333">005</div></div>
<div style="left:606px;top:1096.3px;width:2px;height:20.8px;background:#e0e0e0"></div>
<div style="left:513px;top:1096.3px;width:93.5px;height:20.8px;overflow:hidden"><div class="" style="left:0.5px;top:3.4px;height:14px;line-height:14px;color:#0a0a0a;font-weight:500">钻</div></div>
<div style="left:700px;top:1096.3px;width:2px;height:20.8px;background:#e0e0e0"></div>
<div style="left:607.5px;top:1096.3px;width:93.5px;height:20.8px;overflow:hidden"><div class="" style="left:0.5px;top:3.4px;height:14px;line-height:14px;color:#0a0a0a;font-weight:500">1车间</div></div>
<div style="left:746px;top:1096.3px;width:2px;height:20.8px;background:#e0e0e0"></div>
<div style="left:802px;top:1096.3px;width:2px;height:20.8px;background:#e0e0e0"></div>
<div style="left:848px;top:1096.3px;width:2px;height:20.8px;background:#e0e0e0"></div>
<div style="left:804px;top:1096.3px;width:45.5px;height:20.8px;overflow:hidden"><div class="n" style="left:0.5px;top:3.4px;height:14px;line-height:14px;color:#333">*</div></div>
<div style="left:918px;top:1096.3px;width:2px;height:20.8px;background:#e0e0e0"></div>
<div style="left:850.5px;top:1096.3px;width:69px;height:20.8px;overflow:hidden"><div class="" style="left:0.5px;top:3.4px;height:14px;line-height:14px;color:#0a0a0a;font-weight:500">分钟</div></div>
<div style="left:988px;top:1096.3px;width:2px;height:20.8px;background:#e0e0e0"></div>
<div style="left:920.5px;top:1096.3px;width:69px;height:20.8px;overflow:hidden"><div class="n" style="right:3px;top:3.4px;height:14px;line-height:14px;color:#333">6.00</div></div>
<div style="left:1084px;top:1096.3px;width:2px;height:20.8px;background:#e0e0e0"></div>
<div style="left:990.5px;top:1096.3px;width:94px;height:20.8px;overflow:hidden"><div class="" style="left:0.5px;top:3.4px;height:14px;line-height:14px;color:#0a0a0a;font-weight:500">是</div></div>
<div style="left:1152px;top:1096.3px;width:2px;height:20.8px;background:#e0e0e0"></div>
<div style="left:1085.5px;top:1096.3px;width:68px;height:20.8px;overflow:hidden"><div class="" style="left:0.5px;top:3.4px;height:14px;line-height:14px;color:#0a0a0a;font-weight:500">否</div></div>
<div style="left:1212px;top:1096.3px;width:2px;height:20.8px;background:#e0e0e0"></div>
<div style="left:1154.5px;top:1096.3px;width:59px;height:20.8px;overflow:hidden"><div class="n" style="right:3px;top:3.4px;height:14px;line-height:14px;color:#333">0.00</div></div>
<div style="left:1270px;top:1096.3px;width:2px;height:20.8px;background:#e0e0e0"></div>
<div style="left:1366px;top:1096.3px;width:2px;height:20.8px;background:#e0e0e0"></div>
<div style="left:1272.5px;top:1096.3px;width:94px;height:20.8px;overflow:hidden"><div class="n" style="right:3px;top:3.4px;height:14px;line-height:14px;color:#333">4.00</div></div>
<div style="left:1460px;top:1096.3px;width:2px;height:20.8px;background:#e0e0e0"></div>
<div style="left:1367.5px;top:1096.3px;width:93px;height:20.8px;overflow:hidden"><div class="n" style="right:3px;top:3.4px;height:14px;line-height:14px;color:#333">6.00</div></div>
<div style="left:1506px;top:1096.3px;width:2px;height:20.8px;background:#e0e0e0"></div>
<div style="left:1576px;top:1096.3px;width:2px;height:20.8px;background:#e0e0e0"></div>
<div style="left:1507.5px;top:1096.3px;width:69px;height:20.8px;overflow:hidden"><div class="n" style="right:3px;top:3.4px;height:14px;line-height:14px;color:#333">1.00</div></div>
<div style="left:1678px;top:1096.3px;width:2px;height:20.8px;background:#e0e0e0"></div>
<div style="left:1619.5px;top:0px;width:80px;height:1170px;background:#fff"></div>
</div>
</body></html>
